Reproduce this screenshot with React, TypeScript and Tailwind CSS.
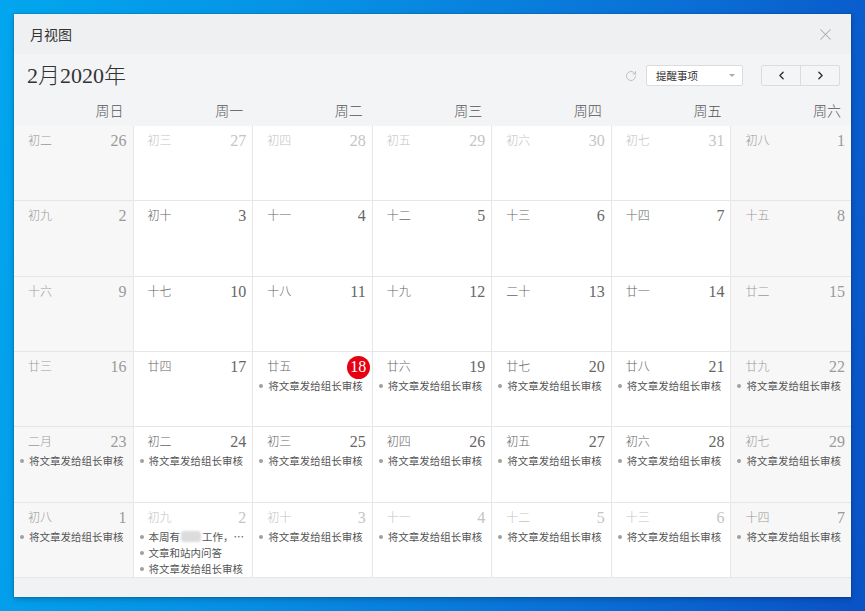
// ── MonthView ─────────────────────────────────────────────────────────────────
// A "月视图" calendar window on a desktop: February 2020 with lunar dates and
// reminder items.

import { RotateCw, ChevronLeft, ChevronRight, X } from "lucide-react";

// ── Data ──────────────────────────────────────────────────────────────────────

interface Day {
  day: number;
  lunar: string;
  current: boolean;
  today?: boolean;
  events: string[];
}

const TASK = "将文章发给组长审核";
const BLUR = "__BLUR__";

const WEEKDAYS = ["周日", "周一", "周二", "周三", "周四", "周五", "周六"];

const d = (day: number, lunar: string, current: boolean, events: string[] = [], today = false): Day => ({
  day,
  lunar,
  current,
  events,
  today,
});

const WEEKS: Day[][] = [
  [d(26, "初二", false), d(27, "初三", false), d(28, "初四", false), d(29, "初五", false), d(30, "初六", false), d(31, "初七", false), d(1, "初八", true)],
  [d(2, "初九", true), d(3, "初十", true), d(4, "十一", true), d(5, "十二", true), d(6, "十三", true), d(7, "十四", true), d(8, "十五", true)],
  [d(9, "十六", true), d(10, "十七", true), d(11, "十八", true), d(12, "十九", true), d(13, "二十", true), d(14, "廿一", true), d(15, "廿二", true)],
  [
    d(16, "廿三", true),
    d(17, "廿四", true),
    d(18, "廿五", true, [TASK], true),
    d(19, "廿六", true, [TASK]),
    d(20, "廿七", true, [TASK]),
    d(21, "廿八", true, [TASK]),
    d(22, "廿九", true, [TASK]),
  ],
  [
    d(23, "二月", true, [TASK]),
    d(24, "初二", true, [TASK]),
    d(25, "初三", true, [TASK]),
    d(26, "初四", true, [TASK]),
    d(27, "初五", true, [TASK]),
    d(28, "初六", true, [TASK]),
    d(29, "初七", true, [TASK]),
  ],
  [
    d(1, "初八", false, [TASK]),
    d(2, "初九", false, [BLUR, "文章和站内问答", TASK]),
    d(3, "初十", false, [TASK]),
    d(4, "十一", false, [TASK]),
    d(5, "十二", false, [TASK]),
    d(6, "十三", false, [TASK]),
    d(7, "十四", false, [TASK]),
  ],
];

const SERIF = "font-['Liberation_Serif','Noto_Sans_CJK_SC',serif]";
const SANS = "font-['Noto_Sans_CJK_SC','Liberation_Sans',sans-serif]";

// ── Cell ──────────────────────────────────────────────────────────────────────

function DayCell({ cell, weekend, last }: { cell: Day; weekend: boolean; last: boolean }) {
  // Weekend columns keep a mid grey; weekdays fade out when outside the month.
  const tone = weekend ? "text-[#9a9a9a]" : cell.current ? "text-[#666]" : "text-[#c4c4c4]";
  return (
    <div
      className={`flex flex-col border-b border-[#e6e6e6] ${last ? "" : "border-r"} ${
        weekend ? "bg-[#f7f7f7]" : "bg-white"
      } overflow-hidden`}
    >
      <div className={`flex items-center justify-between pl-[14px] pr-[6px] pt-[7px] h-[23px] ${tone}`}>
        <span className={`${SERIF} font-light text-[12px] leading-[16px]`}>{cell.lunar}</span>
        {cell.today ? (
          <span
            className={`${SERIF} flex items-center justify-center w-[23px] h-[23px] -mr-[4px] rounded-full bg-[#e60012] text-white text-[16px] leading-none`}
          >
            {cell.day}
          </span>
        ) : (
          <span className={`${SERIF} text-[16px] leading-[16px]`}>{cell.day}</span>
        )}
      </div>
      <div className="mt-[3px] flex flex-col">
        {cell.events.map((ev, i) => (
          <div key={i} className={`${SANS} flex items-center h-[16px] pl-[6px] text-[10.5px] text-[#555] whitespace-nowrap`}>
            <span className="w-[4px] h-[4px] rounded-full bg-[#a0a0a0] mr-[5px] shrink-0" />
            {ev === BLUR ? (
              <span className="flex items-center">
                本周有
                <span className="inline-block w-[20px] h-[11px] rounded-[3px] bg-[#dcdcdc] blur-[1px] mx-[1px]" />
                工作，…
              </span>
            ) : (
              ev
            )}
          </div>
        ))}
      </div>
    </div>
  );
}

// ── Main component ────────────────────────────────────────────────────────────

export default function App() {
  return (
    <div className="w-[865px] h-[611px] pt-[14px] pl-[14px] bg-[linear-gradient(100deg,#02a6ef_0%,#078fe4_35%,#0a6fd6_70%,#0a52c6_100%)] overflow-hidden">
      <div className={`${SANS} w-[837px] h-[583px] flex flex-col bg-[#f3f4f6] shadow-[0_0_0_1px_rgba(0,0,0,0.08),0_2px_6px_rgba(0,0,0,0.25)]`}>
        {/* Title bar */}
        <div className="h-[40px] flex items-center justify-between pl-[16px] pr-[16px] bg-[#eff0f2] shrink-0">
          <span className="text-[14px] text-[#333]">月视图</span>
          <X size={19} strokeWidth={1.3} className="text-[#aaa]" />
        </div>

        {/* Toolbar */}
        <div className="h-[43px] flex items-center justify-between pl-[13px] pr-[11px] shrink-0">
          <span className={`${SERIF} font-light text-[22px] text-[#333] leading-none`}>2月2020年</span>
          <div className="flex items-center">
            <RotateCw size={12} strokeWidth={1.8} className="text-[#bbb] mr-[9px]" />
            <div className="w-[97px] h-[21px] flex items-center justify-between pl-[9px] pr-[7px] bg-white border border-[#dcdcdc] rounded-[2px]">
              <span className="text-[10.5px] text-[#333]">提醒事项</span>
              <span className="w-0 h-0 border-l-[3px] border-r-[3px] border-t-[3px] border-l-transparent border-r-transparent border-t-[#aaa]" />
            </div>
            <div className="ml-[18px] w-[79px] h-[21px] flex border border-[#dcdcdc] rounded-[2px] bg-[#f4f5f7]">
              <div className="flex-1 flex items-center justify-center border-r border-[#dcdcdc]">
                <ChevronLeft size={13} strokeWidth={2.6} className="text-[#333]" />
              </div>
              <div className="flex-1 flex items-center justify-center">
                <ChevronRight size={13} strokeWidth={2.6} className="text-[#333]" />
              </div>
            </div>
          </div>
        </div>

        {/* Weekday header */}
        <div className="h-[29px] grid grid-cols-7 shrink-0">
          {WEEKDAYS.map((w) => (
            <div key={w} className={`${SERIF} font-light flex items-center justify-end pr-[10px] text-[14px] text-[#555]`}>
              {w}
            </div>
          ))}
        </div>

        {/* Month grid */}
        <div className="h-[452px] grid grid-cols-7 grid-rows-6 shrink-0">
          {WEEKS.flatMap((week, wi) =>
            week.map((cell, ci) => (
              <DayCell key={`${wi}-${ci}`} cell={cell} weekend={ci === 0 || ci === 6} last={ci === 6} />
            ))
          )}
        </div>

        {/* Footer */}
        <div className="flex-1 bg-[#f1f2f4]" />
      </div>
    </div>
  );
}
